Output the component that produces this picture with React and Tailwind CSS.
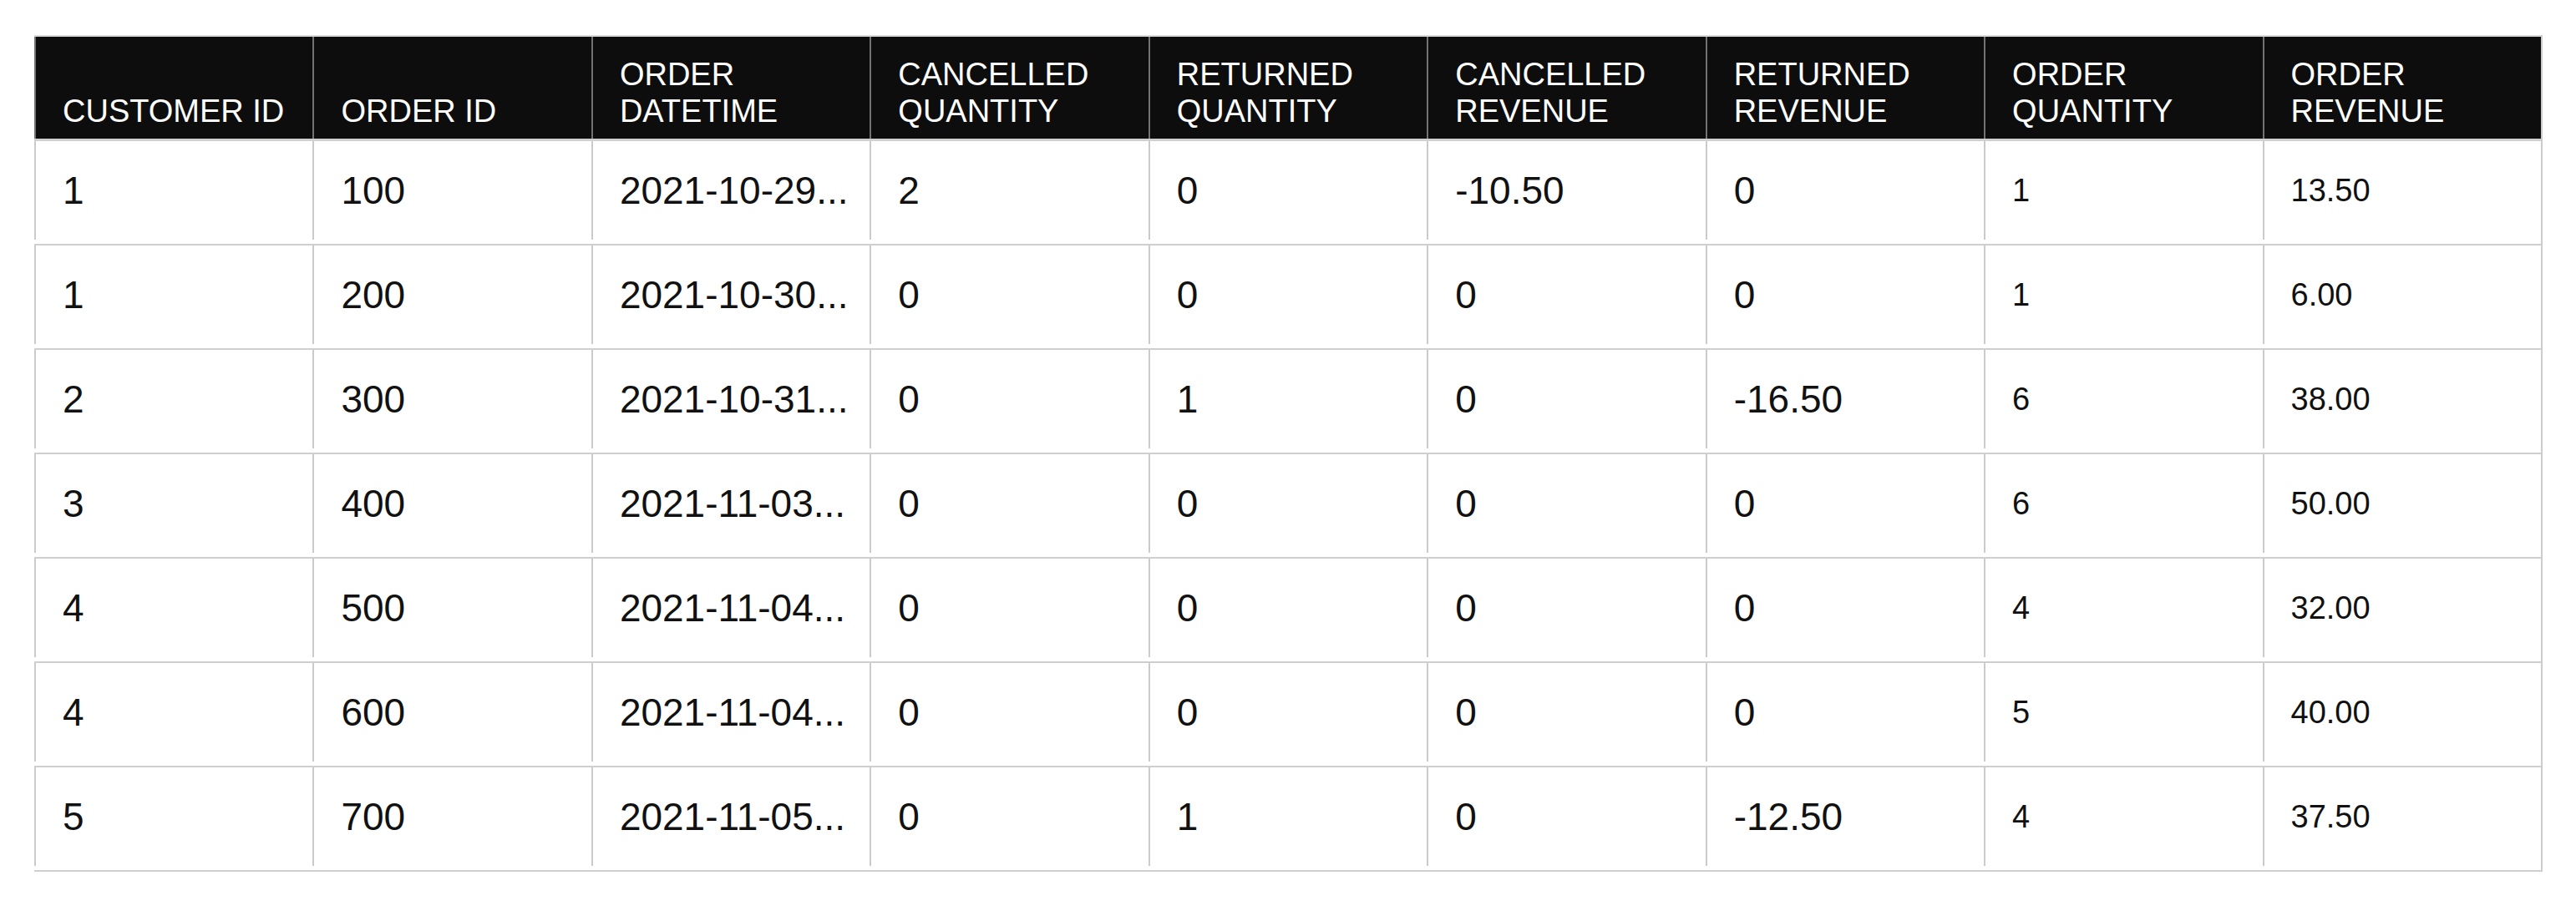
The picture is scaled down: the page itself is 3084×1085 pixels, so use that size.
import React from 'react'

const COLUMNS = [
  ['CUSTOMER ID'],
  ['ORDER ID'],
  ['ORDER', 'DATETIME'],
  ['CANCELLED', 'QUANTITY'],
  ['RETURNED', 'QUANTITY'],
  ['CANCELLED', 'REVENUE'],
  ['RETURNED', 'REVENUE'],
  ['ORDER', 'QUANTITY'],
  ['ORDER', 'REVENUE'],
]

const ROWS = [
  ['1', '100', '2021-10-29...', '2', '0', '-10.50', '0', '1', '13.50'],
  ['1', '200', '2021-10-30...', '0', '0', '0', '0', '1', '6.00'],
  ['2', '300', '2021-10-31...', '0', '1', '0', '-16.50', '6', '38.00'],
  ['3', '400', '2021-11-03...', '0', '0', '0', '0', '6', '50.00'],
  ['4', '500', '2021-11-04...', '0', '0', '0', '0', '4', '32.00'],
  ['4', '600', '2021-11-04...', '0', '0', '0', '0', '5', '40.00'],
  ['5', '700', '2021-11-05...', '0', '1', '0', '-12.50', '4', '37.50'],
]

export default function App() {
  return (
    <main className="min-h-screen bg-white pt-[42px] font-['Liberation_Sans',Arial,sans-serif]">
      <div className="ml-[41px] mr-[40px] border-r-2 border-[#cccccc]">
        {/* header */}
        <div className="grid grid-cols-9 h-[127px] bg-[#0d0d0d] border-t-2 border-b-[3px] border-t-[#dadada] border-b-[#d0d0d0]">
          {COLUMNS.map((lines, i) => (
            <div
              key={i}
              className="flex flex-col justify-end border-l-2 border-[#727272] pl-[32px] pb-[11px] text-[38px] leading-[44px] text-white"
            >
              {lines.map((line) => (
                <span key={line} className="whitespace-nowrap">{line}</span>
              ))}
            </div>
          ))}
        </div>

        {/* rows */}
        {ROWS.map((row, r) => (
          <div key={r} className="grid grid-cols-9 pb-[5px] border-b-2 border-[#cfcfcf]">
            {row.map((value, c) => (
              <div
                key={c}
                className={`h-[118px] flex items-center border-l-2 border-[#cbcbcb] pl-[32px] whitespace-nowrap overflow-hidden text-[#111111] ${
                  c >= 7 ? 'text-[38px]' : 'text-[46px]'
                }`}
              >
                {value}
              </div>
            ))}
          </div>
        ))}
      </div>
    </main>
  )
}
